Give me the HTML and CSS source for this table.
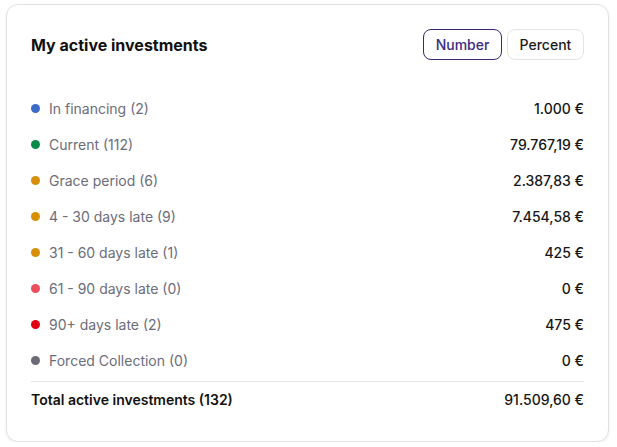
FILE: index.html
```html
<!DOCTYPE html>
<html>
<head>
<meta charset="utf-8">
<link rel="stylesheet" href="styles.css">
</head>
<body>
<div class="card">
  <div class="header">
    <h2 class="title">My active investments</h2>
    <div class="toggle">
      <button class="btn btn-active">Number</button>
      <button class="btn">Percent</button>
    </div>
  </div>
  <ul class="list">
    <li class="row"><span class="label"><span class="dot blue"></span>In financing (2)</span><span class="value">1.000 €</span></li>
    <li class="row"><span class="label"><span class="dot green"></span>Current (112)</span><span class="value">79.767,19 €</span></li>
    <li class="row"><span class="label"><span class="dot amber"></span>Grace period (6)</span><span class="value">2.387,83 €</span></li>
    <li class="row"><span class="label"><span class="dot amber"></span>4 - 30 days late (9)</span><span class="value">7.454,58 €</span></li>
    <li class="row"><span class="label"><span class="dot amber"></span>31 - 60 days late (1)</span><span class="value">425 €</span></li>
    <li class="row"><span class="label"><span class="dot pink"></span>61 - 90 days late (0)</span><span class="value">0 €</span></li>
    <li class="row"><span class="label"><span class="dot red"></span>90+ days late (2)</span><span class="value">475 €</span></li>
    <li class="row"><span class="label"><span class="dot gray"></span>Forced Collection (0)</span><span class="value">0 €</span></li>
  </ul>
  <div class="row total"><span class="total-label">Total active investments (132)</span><span class="value">91.509,60 €</span></div>
</div>
</body>
</html>
```
FILE: styles.css
```css
* { box-sizing: border-box; }
body {
  margin: 0;
  padding: 4px 8px 0 6px;
  font-family: Inter, "Noto Sans", sans-serif;
  background: #fff;
}
.card {
  width: 603px;
  height: 438px;
  border: 1px solid #e2e2e4;
  border-radius: 12px;
  box-shadow: 0 1px 3px rgba(0,0,0,0.07);
  padding: 24px 24px 23px 24px;
  background: #fff;
}
.header {
  display: flex;
  justify-content: space-between;
  align-items: center;
  height: 31px;
  margin-bottom: 30px;
}
.title {
  margin: 0;
  font-size: 16px;
  font-weight: 700;
  color: #111;
}
.toggle {
  display: flex;
  gap: 5px;
}
.btn {
  font-family: Inter, "Noto Sans", sans-serif;
  font-size: 14px;
  font-weight: 500;
  height: 31px;
  border-radius: 8px;
  background: #fff;
  border: 1px solid #e4e4e6;
  color: #1a1a1a;
  padding: 0;
  width: 77px;
}
.btn-active {
  border-color: #3f2478;
  color: #3b2a80;
  width: 79px;
}
.list {
  list-style: none;
  margin: 0;
  padding: 0;
}
.row {
  display: flex;
  justify-content: space-between;
  align-items: center;
  height: 36px;
}
.label {
  display: flex;
  align-items: center;
  gap: 9px;
  font-size: 14px;
  color: #6c6c7a;
}
.dot {
  width: 9px;
  height: 9px;
  border-radius: 50%;
  display: inline-block;
}
.blue { background: #3b6cca; }
.green { background: #098a46; }
.amber { background: #d98f05; }
.pink { background: #e9505b; }
.red { background: #e1000f; }
.gray { background: #6b6b77; }
.value {
  font-size: 14px;
  font-weight: 500;
  color: #151515;
}
.total {
  margin-top: 3px;
  border-top: 1px solid #e5e5e7;
}
.total-label {
  font-size: 14px;
  font-weight: 600;
  color: #111;
}
```
